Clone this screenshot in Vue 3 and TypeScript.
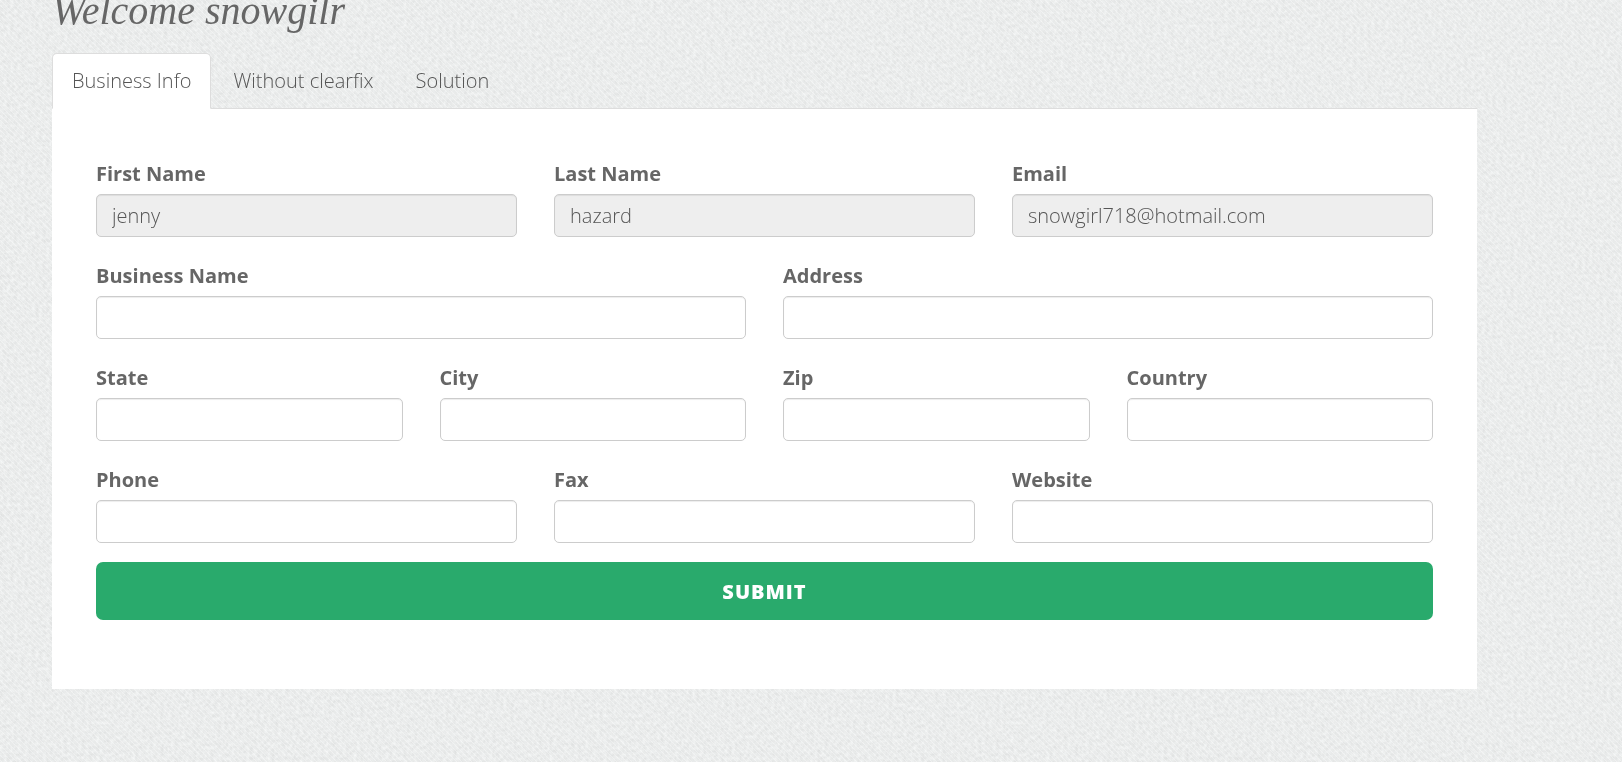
<script setup lang="ts">
import { ref } from 'vue'

interface Field {
  id: string
  label: string
  type: string
  value: string
  disabled?: boolean
}

const tabs: string[] = ['Business Info', 'Without clearfix', 'Solution']
const activeTab = ref(0)

const rows = ref<Field[][]>([
  [
    { id: 'first-name', label: 'First Name', type: 'text', value: 'jenny', disabled: true },
    { id: 'last-name', label: 'Last Name', type: 'text', value: 'hazard', disabled: true },
    { id: 'email', label: 'Email', type: 'email', value: 'snowgirl718@hotmail.com', disabled: true },
  ],
  [
    { id: 'business-name', label: 'Business Name', type: 'text', value: '' },
    { id: 'address', label: 'Address', type: 'text', value: '' },
  ],
  [
    { id: 'state', label: 'State', type: 'text', value: '' },
    { id: 'city', label: 'City', type: 'text', value: '' },
    { id: 'zip', label: 'Zip', type: 'text', value: '' },
    { id: 'country', label: 'Country', type: 'text', value: '' },
  ],
  [
    { id: 'phone', label: 'Phone', type: 'tel', value: '' },
    { id: 'fax', label: 'Fax', type: 'tel', value: '' },
    { id: 'website', label: 'Website', type: 'url', value: '' },
  ],
])
</script>

<template>
  <svg class="texture" aria-hidden="true">
    <defs>
      <pattern id="twill" width="5" height="5" patternUnits="userSpaceOnUse">
        <path d="M-1 -1 L6 6 M-1 4 L1 6 M4 -1 L6 1" stroke="#ffffff" stroke-width="1" stroke-opacity="0.35" />
      </pattern>
      <filter id="grain" x="0" y="0" width="100%" height="100%" color-interpolation-filters="sRGB">
        <feTurbulence type="fractalNoise" baseFrequency="0.28" numOctaves="3" seed="4" result="noise" />
        <feColorMatrix in="noise" type="matrix" values="0.1 0 0 0 0.865  0.1 0 0 0 0.872  0.1 0 0 0 0.871  0 0 0 0 1" />
      </filter>
    </defs>
    <rect width="100%" height="100%" filter="url(#grain)" />
    <rect width="100%" height="100%" fill="url(#twill)" />
  </svg>

  <main class="page">
    <h1>Welcome snowgilr</h1>

    <nav class="tabs">
      <a
        v-for="(tab, i) in tabs"
        :key="tab"
        href="#"
        class="tab"
        :class="{ active: i === activeTab }"
        @click.prevent="activeTab = i"
      >{{ tab }}</a>
    </nav>

    <form class="panel" @submit.prevent>
      <div v-for="(row, i) in rows" :key="i" class="row">
        <div v-for="field in row" :key="field.id" class="field">
          <label :for="field.id">{{ field.label }}</label>
          <input :id="field.id" v-model="field.value" :type="field.type" :disabled="field.disabled" />
        </div>
      </div>
      <button type="submit">SUBMIT</button>
    </form>
  </main>
</template>

<style>
body {
  background: #e9ebea;
}
</style>

<style scoped>
.texture {
  position: fixed;
  inset: 0;
  width: 100%;
  height: 100%;
  z-index: -1;
}

.page {
  margin: 0 145px 0 52px;
  padding-bottom: 72px;
  font-family: "Open Sans", "Noto Sans", sans-serif;
  font-size: 20px;
  font-weight: 300;
  line-height: 27px;
  color: #555;
}

h1 {
  margin: -13px 0 18px;
  font-family: Georgia, "Liberation Serif", serif;
  font-size: 40px;
  font-style: italic;
  font-weight: 400;
  line-height: 48px;
  color: #666;
}

.tabs {
  display: flex;
  gap: 2px;
  border-bottom: 1px solid #ddd;
}

.tab {
  margin-bottom: -1px;
  padding: 13px 19px 14px;
  border: 1px solid transparent;
  border-radius: 5px 5px 0 0;
  color: #555;
  text-decoration: none;
}

.tab.active {
  background: #fff;
  border-color: #ddd;
  border-bottom-color: #fff;
}

.panel {
  padding: 51px 44px 69px;
  background: #fff;
}

.row {
  display: flex;
  gap: 37px;
  margin-bottom: 25px;
}

.field {
  flex: 1 1 0;
  min-width: 0;
}

label {
  display: block;
  margin-bottom: 7px;
  font-weight: 700;
  color: #666;
}

input {
  display: block;
  box-sizing: border-box;
  width: 100%;
  height: 43px;
  padding: 0 15px;
  border: 1px solid #ccc;
  border-radius: 5px;
  background: #fff;
  box-shadow: inset 0 1px 1px rgba(0, 0, 0, 0.075);
  font: inherit;
  color: #555;
}

input:disabled {
  background: #eee;
}

button {
  display: block;
  width: 100%;
  height: 58px;
  margin-top: -6px;
  border: 0;
  border-radius: 7px;
  background: #29aa6c;
  font-family: inherit;
  font-size: 20px;
  font-weight: 800;
  letter-spacing: 1px;
  color: #fff;
}
</style>
